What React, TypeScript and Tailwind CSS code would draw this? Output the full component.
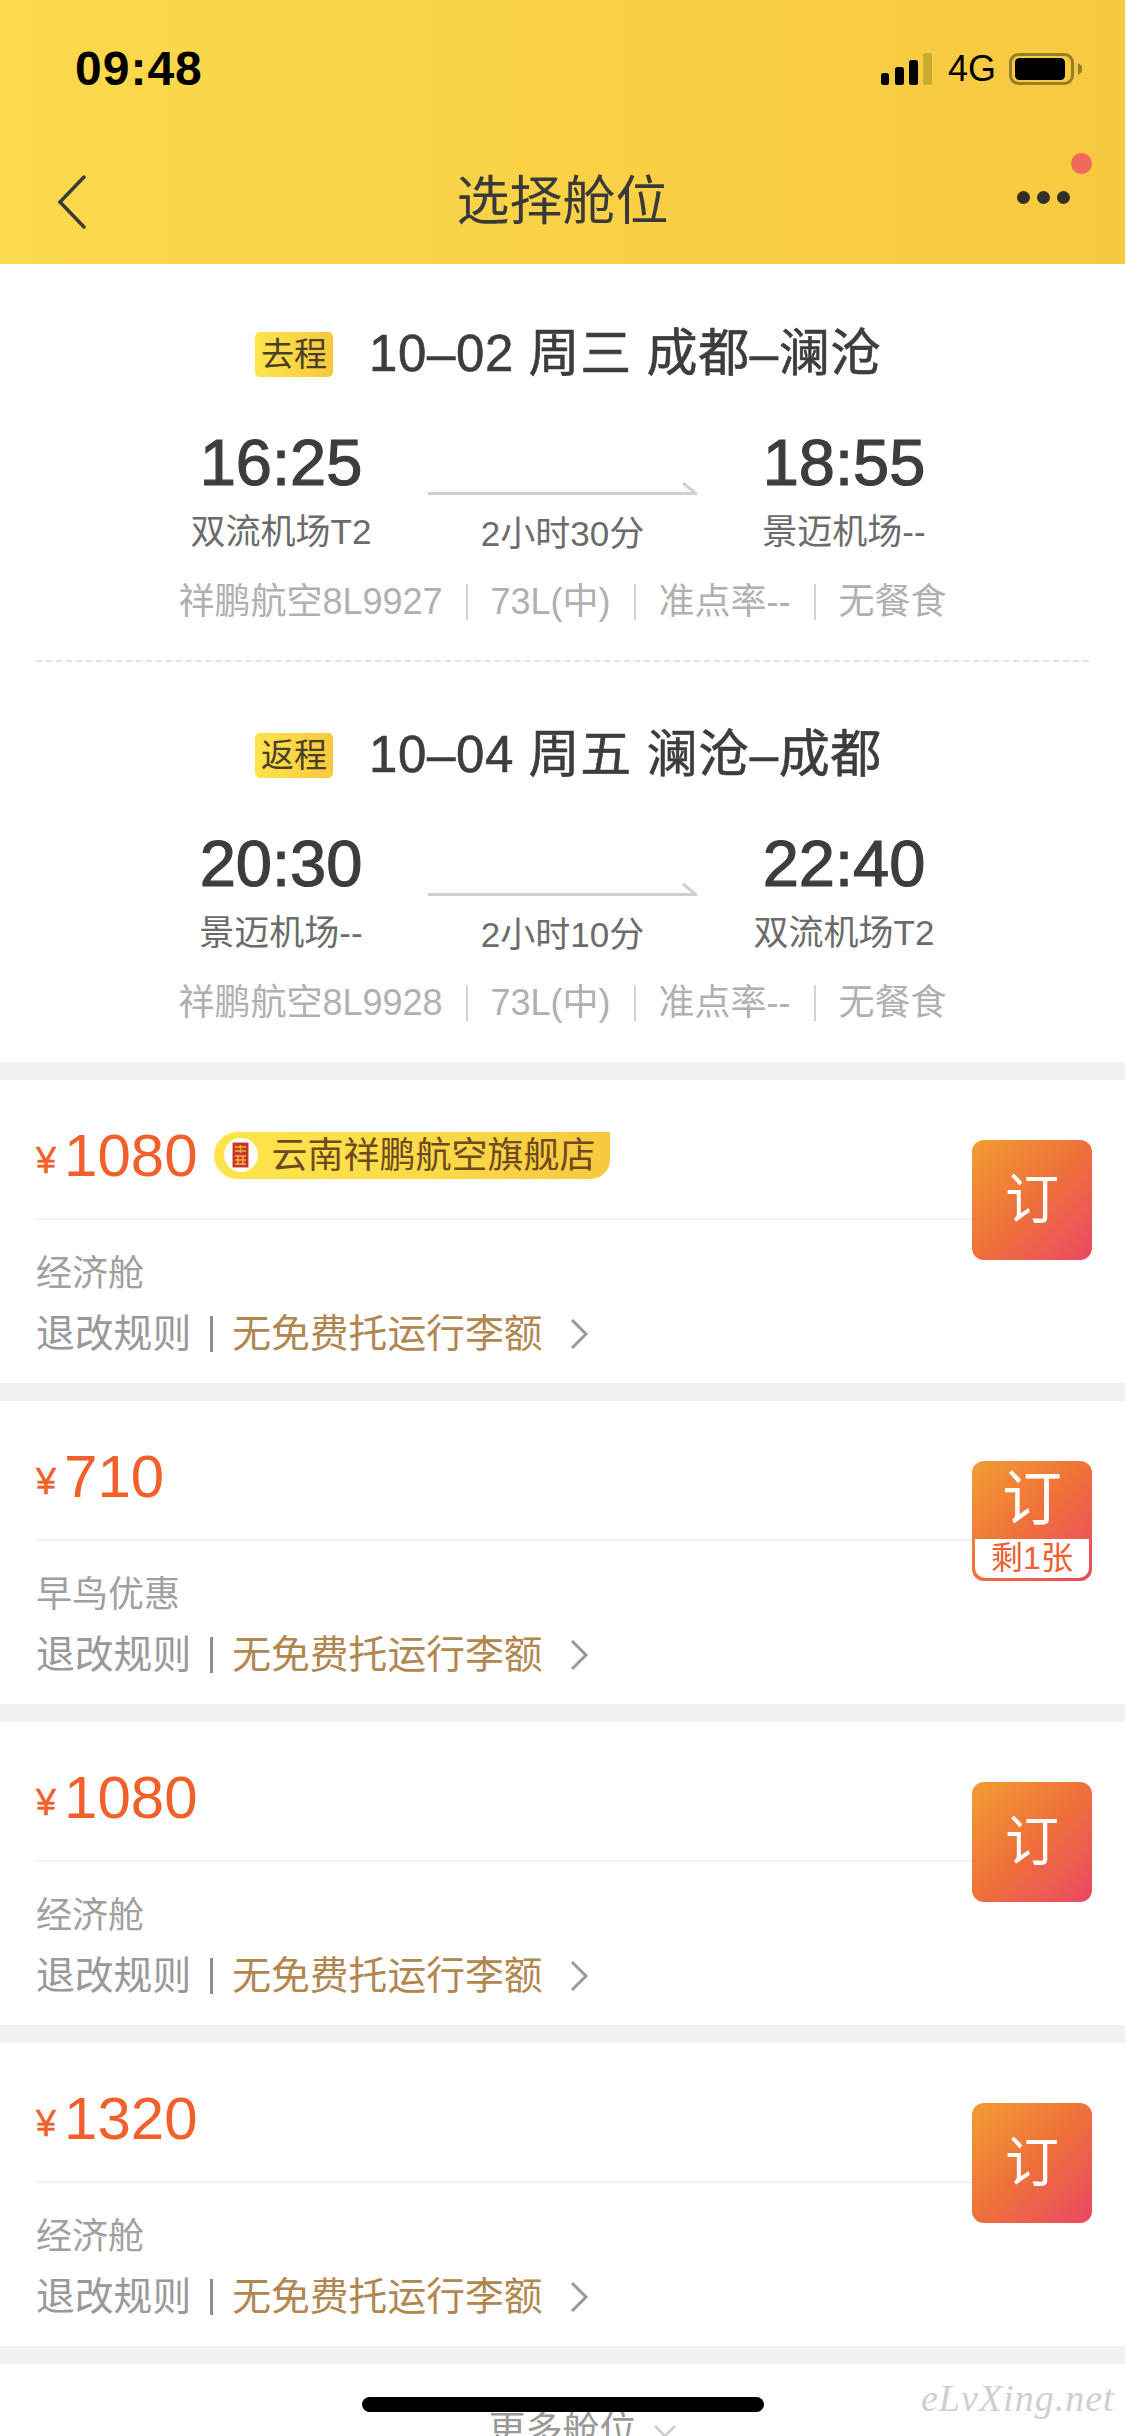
const FONT = "font-['Liberation_Sans','Noto_Sans_CJK_SC',sans-serif]";

type Leg = {
  tag: string;
  route: string;
  depart: string;
  arrive: string;
  from: string;
  to: string;
  duration: string;
  flight: string;
};

const LEGS: Leg[] = [
  { tag: '去程', route: '10–02 周三 成都–澜沧', depart: '16:25', arrive: '18:55', from: '双流机场T2', to: '景迈机场--', duration: '2小时30分', flight: '祥鹏航空8L9927' },
  { tag: '返程', route: '10–04 周五 澜沧–成都', depart: '20:30', arrive: '22:40', from: '景迈机场--', to: '双流机场T2', duration: '2小时10分', flight: '祥鹏航空8L9928' },
];

const FARES = [
  { price: '1080', cabin: '经济舱', store: true, left: null },
  { price: '710', cabin: '早鸟优惠', store: false, left: '剩1张' },
  { price: '1080', cabin: '经济舱', store: false, left: null },
  { price: '1320', cabin: '经济舱', store: false, left: null },
];

function StatusIcons() {
  return (
    <div className="flex items-center">
      <svg width="52" height="32" viewBox="0 0 52 32" className="mr-[15px]">
        <rect x="0" y="20" width="8" height="12" rx="2.5" fill="#000" />
        <rect x="14" y="14" width="9" height="18" rx="2.5" fill="#000" />
        <rect x="28" y="7" width="9" height="25" rx="2.5" fill="#000" />
        <rect x="42" y="0" width="9" height="32" rx="2.5" fill="#c9a92f" />
      </svg>
      <span className="text-[36px] leading-[32px] text-black mr-[15px] w-[46px]">4G</span>
      <svg width="73" height="32" viewBox="0 0 73 32">
        <rect x="1.5" y="1.5" width="62" height="29" rx="8" fill="none" stroke="#94802a" strokeWidth="3" />
        <rect x="6" y="5" width="50" height="22" rx="4.5" fill="#000" />
        <path d="M69 10 L73 13 V19 L69 22 Z" fill="#94802a" />
      </svg>
    </div>
  );
}

function Header() {
  return (
    <div className="relative h-[264px] pt-[53px] bg-gradient-to-r from-[#fbda4b] to-[#f7c940]">
      <div className="flex items-center justify-between h-[32px] pl-[75px] pr-[43px]">
        <span className="text-[48px] leading-[32px] font-bold tracking-[1px] text-black">09:48</span>
        <StatusIcons />
      </div>
      <div className="grid grid-cols-3 items-center h-[64px] mt-[85px] px-[55px]">
        <svg width="32" height="56" viewBox="0 0 32 56" fill="none">
          <path d="M29 3 L5 28 L29 53" stroke="#3a3a3a" strokeWidth="3.5" strokeLinecap="round" />
        </svg>
        <div className="text-center text-[53px] leading-[64px] whitespace-nowrap text-[#3a3a3a]">选择舱位</div>
        <div className="flex justify-end gap-[7px] mb-[10px]">
          <span className="w-[13px] h-[13px] rounded-full bg-[#33302a]" />
          <span className="w-[13px] h-[13px] rounded-full bg-[#33302a]" />
          <span className="w-[13px] h-[13px] rounded-full bg-[#33302a]" />
        </div>
      </div>
      <span className="absolute left-[1071px] top-[153px] w-[21px] h-[21px] rounded-full bg-[#f0695a]" />
    </div>
  );
}

function FlightBlock({ leg }: { leg: Leg }) {
  return (
    <div className="flex flex-col items-center">
      <div className="flex items-center h-[60px] pl-[12px]">
        <span className="w-[78px] h-[45px] rounded-[5px] bg-gradient-to-r from-[#fde44c] to-[#f7c83e] text-[33px] leading-[45px] text-center text-[#4a4026]">{leg.tag}</span>
        <span className="ml-[36px] text-[51px] leading-[60px] tracking-[0.6px] text-[#3d3d3d] [-webkit-text-stroke:0.6px_#3d3d3d]">{leg.route}</span>
      </div>
      <div className="grid grid-cols-[260px_269px_260px] gap-x-[17px] justify-center mt-[44px]">
        <div className="flex flex-col items-center">
          <span className="text-[65px] leading-[70px] text-[#3d3d3d] [-webkit-text-stroke:1.2px_#3d3d3d]">{leg.depart}</span>
          <span className="text-[35px] leading-[40px] mt-[14px] text-[#6b6b6b]">{leg.from}</span>
        </div>
        <div className="flex flex-col items-center">
          <svg width="269" height="14" viewBox="0 0 269 14" className="mt-[53px]" fill="none">
            <path d="M0 12.5 H268 L255 2" stroke="#d0d0d0" strokeWidth="3" />
          </svg>
          <span className="text-[35px] leading-[40px] mt-[19px] text-[#6b6b6b]">{leg.duration}</span>
        </div>
        <div className="flex flex-col items-center">
          <span className="text-[65px] leading-[70px] text-[#3d3d3d] [-webkit-text-stroke:1.2px_#3d3d3d]">{leg.arrive}</span>
          <span className="text-[35px] leading-[40px] mt-[14px] text-[#6b6b6b]">{leg.to}</span>
        </div>
      </div>
      <div className="flex items-center mt-[28px] h-[40px] text-[36px] leading-[40px] text-[#b0b0b0]">
        <span>{leg.flight}</span>
        <span className="w-[2px] h-[36px] bg-[#d4d4d4] mx-[23px]" />
        <span>73L(中)</span>
        <span className="w-[2px] h-[36px] bg-[#d4d4d4] mx-[23px]" />
        <span>准点率--</span>
        <span className="w-[2px] h-[36px] bg-[#d4d4d4] mx-[23px]" />
        <span>无餐食</span>
      </div>
    </div>
  );
}

function StoreBadge() {
  return (
    <div className="flex items-center ml-[16px] h-[47px] w-[396px] mt-[-2px] rounded-l-[24px] rounded-br-[20px] bg-gradient-to-r from-[#fde44c] via-[#fbdc48] to-[#f6c83e]">
      <span className="flex items-center justify-center w-[34px] h-[34px] ml-[10px] rounded-full bg-white">
        <svg width="17" height="26" viewBox="0 0 17 26">
          <rect x="0.5" y="0.5" width="16" height="25" rx="1" fill="#c8352c" stroke="#e9a39a" />
          <path d="M3 5 H14 M8.5 3 V11 M3 9 H14 M3 14 H14 M3 18 H14 M3 22 H14 M6 13 V23 M11 13 V23" stroke="#f2b23a" strokeWidth="1.5" />
        </svg>
      </span>
      <span className="ml-[14px] text-[36px] leading-[47px] text-[#6e4a1e]">云南祥鹏航空旗舰店</span>
    </div>
  );
}

function BookButton({ left }: { left: string | null }) {
  return (
    <div className="flex flex-col w-[120px] h-[120px] mt-[60px] rounded-[12px] overflow-hidden bg-gradient-to-br from-[#f29c33] via-[#ee7039] to-[#ea4660]">
      {left ? (
        <>
          <span className="h-[78px] text-center text-[60px] leading-[78px] text-white">订</span>
          <span className="h-[39px] mx-[3px] rounded-b-[10px] bg-white text-center text-[32px] leading-[38px] text-[#f0602f]">{left}</span>
        </>
      ) : (
        <span className="text-center text-[54px] leading-[120px] text-white">订</span>
      )}
    </div>
  );
}

function FareCard({ fare }: { fare: (typeof FARES)[number] }) {
  return (
    <div className="flex h-[303px] mt-[18px] pl-[36px] pr-[33px] bg-white">
      <div className="flex-1 flex flex-col">
        <div className="flex items-center h-[140px] border-b-2 border-[#f3f3f3] pt-[14px]">
          <span className="text-[36px] leading-[40px] mt-[10px] text-[#f1602a] mr-[8px] [-webkit-text-stroke:0.5px_#f1602a]">¥</span>
          <span className="text-[60px] leading-[64px] text-[#f1602a]">{fare.price}</span>
          {fare.store && <StoreBadge />}
        </div>
        <div className="mt-[32px] text-[36px] leading-[44px] text-[#a0a0a0]">{fare.cabin}</div>
        <div className="flex items-center mt-[15px] h-[46px] text-[38.8px] leading-[46px]">
          <span className="text-[#999999]">退改规则</span>
          <span className="w-[3px] h-[36px] bg-[#8f8f8f] mx-[19px]" />
          <span className="text-[#b2864f]">无免费托运行李额</span>
          <svg width="20" height="32" viewBox="0 0 20 32" fill="none" className="ml-[26px]">
            <path d="M3 2 L17 16 L3 30" stroke="#999999" strokeWidth="3" />
          </svg>
        </div>
      </div>
      <BookButton left={fare.left} />
    </div>
  );
}

export default function App() {
  return (
    <div className={`relative w-[1125px] h-[2436px] overflow-hidden bg-[#f1f1f1] ${FONT}`}>
      <Header />
      <div className="h-[798px] pt-[60px] bg-white">
        <FlightBlock leg={LEGS[0]} />
        <div className="mx-[36px] mt-[38px] mb-[63px] border-t-2 border-dashed border-[#e2e2e2]" />
        <FlightBlock leg={LEGS[1]} />
      </div>
      {FARES.map((fare, i) => (
        <FareCard key={i} fare={fare} />
      ))}
      <div className="flex items-center justify-center h-[100px] mt-[18px] pt-[34px] pl-[40px] bg-white text-[37px] leading-[44px] text-[#999999]">
        更多舱位
        <svg width="24" height="14" viewBox="0 0 24 14" fill="none" className="ml-[16px]">
          <path d="M2 2 L12 12 L22 2" stroke="#cccccc" strokeWidth="2.5" />
        </svg>
      </div>
      <div className="absolute left-[362px] top-[2397px] w-[402px] h-[15px] rounded-full bg-black" />
      <div className="absolute left-[921px] top-[2373px] font-['Liberation_Serif',serif] italic text-[38px] leading-[50px] tracking-[1px] text-[#cfcfcf]">eLvXing.net</div>
    </div>
  );
}
